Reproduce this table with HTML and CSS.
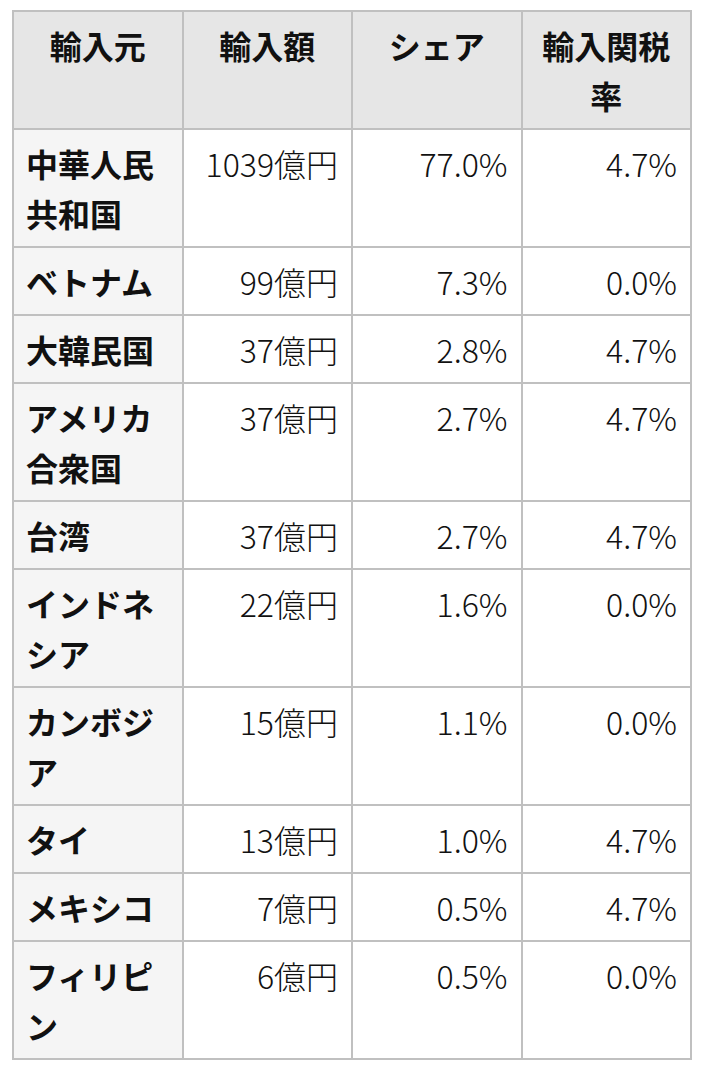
FILE: index.html
```html
<!DOCTYPE html>
<html lang="ja">
<head>
<meta charset="utf-8">
<link rel="stylesheet" href="styles.css">
</head>
<body>
<table class="imports">
  <colgroup><col class="c"><col class="c"><col class="c"><col class="c"></colgroup>
  <thead>
    <tr><th>輸入元</th><th>輸入額</th><th>シェア</th><th>輸入関税率</th></tr>
  </thead>
  <tbody>
    <tr><th class="rh">中華人民共和国</th><td>1039億円</td><td>77.0%</td><td>4.7%</td></tr>
    <tr><th class="rh">ベトナム</th><td>99億円</td><td>7.3%</td><td>0.0%</td></tr>
    <tr><th class="rh">大韓民国</th><td>37億円</td><td>2.8%</td><td>4.7%</td></tr>
    <tr><th class="rh">アメリカ合衆国</th><td>37億円</td><td>2.7%</td><td>4.7%</td></tr>
    <tr><th class="rh">台湾</th><td>37億円</td><td>2.7%</td><td>4.7%</td></tr>
    <tr><th class="rh">インドネシア</th><td>22億円</td><td>1.6%</td><td>0.0%</td></tr>
    <tr><th class="rh">カンボジア</th><td>15億円</td><td>1.1%</td><td>0.0%</td></tr>
    <tr><th class="rh">タイ</th><td>13億円</td><td>1.0%</td><td>4.7%</td></tr>
    <tr><th class="rh">メキシコ</th><td>7億円</td><td>0.5%</td><td>4.7%</td></tr>
    <tr><th class="rh">フィリピン</th><td>6億円</td><td>0.5%</td><td>0.0%</td></tr>
  </tbody>
</table>
</body>
</html>
```

FILE: styles.css
```css
html, body {
  margin: 0;
  padding: 0;
  background: #ffffff;
}
body {
  font-family: "Noto Sans CJK JP", "Noto Sans", sans-serif;
  font-size: 32px;
  line-height: 50px;
  color: #111111;
}
.imports {
  margin: 10px 0 0 12px;
  border-collapse: collapse;
  table-layout: fixed;
  width: 680px;
  border: 2px solid #c0c0c0;
}
.imports .c {
  width: 25%;
}
.imports th,
.imports td {
  border: 2px solid #c0c0c0;
  padding: 8px 12px;
  vertical-align: top;
}
.imports thead th {
  background: #e6e6e6;
  text-align: center;
  font-weight: 700;
}
.imports .rh {
  background: #f5f5f5;
  text-align: left;
  font-weight: 700;
}
.imports td {
  text-align: right;
  font-weight: 300;
  background: #ffffff;
  padding-right: 13px;
}
```
